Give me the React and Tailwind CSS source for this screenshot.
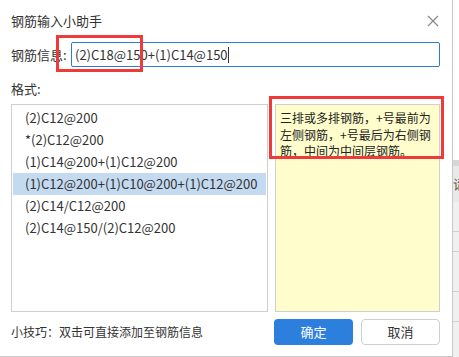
import React from 'react';

const formats = [
  '(2)C12@200',
  '*(2)C12@200',
  '(1)C14@200+(1)C12@200',
  '(1)C12@200+(1)C10@200+(1)C12@200',
  '(2)C14/C12@200',
  '(2)C14@150/(2)C12@200',
];

export default function App() {
  const font = { fontFamily: '"Noto Sans CJK SC", "Liberation Sans", sans-serif' };
  return (
    <div className="w-[459px] h-[357px] bg-[#f0f0f0] flex overflow-hidden" style={font}>
      <div className="w-[453px] shrink-0 h-[357px] bg-white border-r border-b border-[#c8c8c8] flex flex-col text-[#333]">
        {/* title */}
        <div className="h-[42px] flex items-center justify-between pl-[11px] pr-[13px]">
          <span className="text-[13px]">钢筋输入小助手</span>
          <svg width="12" height="12" viewBox="0 0 12 12" className="text-[#888]">
            <path d="M1 1L11 11M11 1L1 11" stroke="currentColor" strokeWidth="1.2" />
          </svg>
        </div>

        {/* input row */}
        <div className="flex items-center pl-[11px] pr-[12px] relative">
          <span className="text-[13px] w-[60px]">钢筋信息:</span>
          <div className="flex-1 h-[25px] border border-[#2b7bd9] rounded-[2px] flex items-center pl-[3px] text-[13px]">
            <span>(2)C18@150+(1)C14@150</span>
            <span className="w-px h-[16px] bg-[#333]" />
          </div>
          <div className="absolute left-[56px] top-[-7px] w-[87px] h-[37px] border-[3px] border-[#f03a3a]" />
        </div>

        <div className="text-[13px] pl-[11px] mt-[12px] h-[25px]">格式:</div>

        {/* list + tip */}
        <div className="flex pl-[11px] pr-[12px] gap-[7px] h-[208px] relative">
          <div className="w-[257px] shrink-0 border border-[#cfcfcf] py-[2px] px-[1px] text-[13px]">
            {formats.map((f, i) => (
              <div
                key={f}
                className={`h-[22px] flex items-center pl-[12px] ${i === 3 ? 'bg-[#c4daf1]' : ''}`}
              >
                {f}
              </div>
            ))}
          </div>
          <div className="flex-1 bg-[#fffdcc] border border-[#cfcfcf] px-[4px] py-[5px] text-[12px] leading-[16.5px] text-[#222]">
            三排或多排钢筋，+号最前为左侧钢筋，+号最后为右侧钢筋，中间为中间层钢筋。
          </div>
          <div className="absolute left-[269px] top-[-8px] w-[175px] h-[63px] border-[3px] border-[#f03a3a]" />
        </div>

        {/* footer */}
        <div className="flex items-center pl-[11px] pr-[12px] mt-[7px]">
          <span className="text-[12px] flex-1">小技巧：双击可直接添加至钢筋信息</span>
          <button className="w-[79px] h-[26px] bg-[#2d7fde] text-white rounded-[4px] text-[13px]">确定</button>
          <button className="w-[79px] h-[26px] ml-[8px] bg-white border border-[#cfcfcf] rounded-[4px] text-[13px] text-[#333]">取消</button>
        </div>
      </div>

      {/* background app strip */}
      <div className="flex-1 min-w-0 flex flex-col overflow-hidden">
        <div className="h-[160px] bg-white" />
        <div className="h-[6px] bg-[#d6d6d6]" />
        <div className="h-[36px] bg-[#e9e9e9] text-[13px] text-[#555] flex items-center">请</div>
        <div className="h-[30px] border-b border-[#d0d0d0]" />
        <div className="h-[20px] border-b border-[#d0d0d0]" />
        <div className="h-[40px] border-b border-[#d0d0d0]" />
        <div className="h-[30px] border-b border-[#d0d0d0]" />
        <div className="flex-1" />
      </div>
    </div>
  );
}
